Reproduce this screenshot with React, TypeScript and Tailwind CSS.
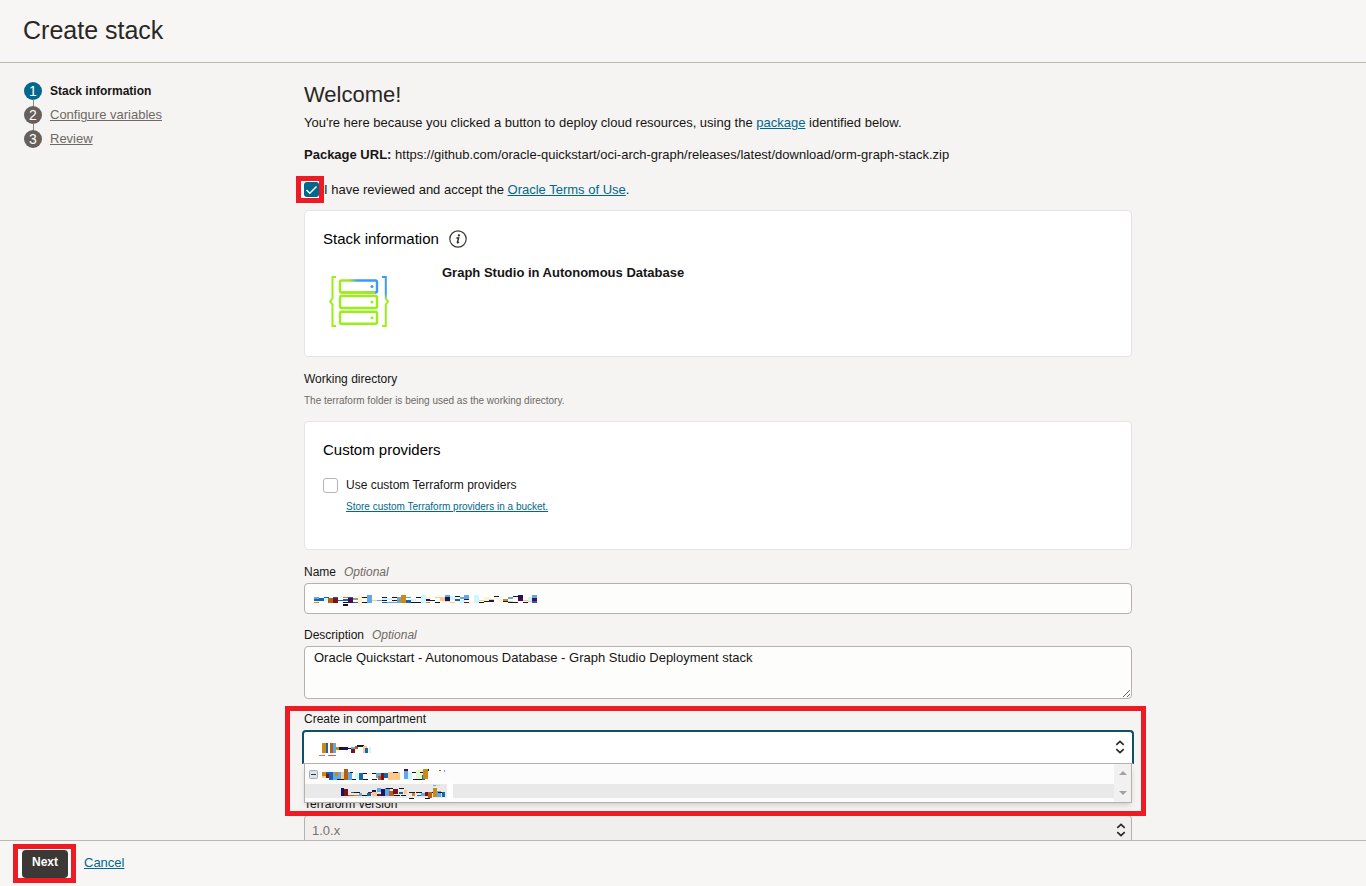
import type { ReactNode } from "react";

type Cell = [x: number, y: number, w: number, h: number, fill: string];

const INK = "#16161d";
const NAVY = "#1b1464";
const BLUE = "#1565b0";
const SKY = "#5ea9e6";
const PALE = "#cdf6ff";
const PEACH = "#fbc98a";
const CREAM = "#fff3cf";
const GOLD = "#cc8a12";
const RUST = "#b0601a";
const WINE = "#7d1018";
const PLUM = "#4f0a52";

const nameCells: Cell[] = [
  [0, 2, 5, 2, SKY], [0, 4, 5, 2, BLUE], [0, 7, 5, 1, GOLD],
  [5, 3, 5, 3, BLUE], [10, 2, 5, 1, BLUE], [10, 3, 4, 3, PALE],
  [14, 3, 5, 5, RUST], [19, 3, 5, 5, WINE], [19, 2, 5, 1, BLUE], [24, 5, 5, 1, BLUE],
  [29, 2, 5, 1, GOLD], [29, 4, 5, 2, BLUE], [29, 7, 5, 1, INK], [29, 9, 5, 2, INK],
  [34, 3, 5, 5, PLUM], [34, 2, 5, 1, BLUE], [39, 3, 5, 1, GOLD], [39, 4, 5, 1, SKY], [39, 7, 5, 1, BLUE],
  [44, 0, 4, 11, CREAM], [48, 2, 5, 1, INK], [48, 7, 5, 1, INK],
  [53, 0, 5, 8, SKY], [58, 5, 5, 1, PEACH], [63, 5, 5, 1, SKY],
  [68, 2, 5, 1, NAVY], [68, 3, 5, 2, PALE], [68, 5, 5, 1, INK], [68, 7, 5, 1, BLUE],
  [73, 3, 5, 2, PALE], [73, 7, 5, 1, SKY], [78, 2, 5, 1, INK], [78, 5, 5, 1, INK], [78, 7, 5, 1, SKY],
  [83, 2, 5, 6, SKY], [83, 5, 5, 1, GOLD], [87, 0, 5, 8, GOLD], [92, 2, 5, 1, SKY], [92, 5, 5, 3, BLUE],
  [97, 4, 5, 2, PALE], [97, 7, 5, 1, INK], [102, 2, 5, 1, INK], [102, 7, 5, 1, INK],
  [107, 0, 5, 8, PALE], [112, 2, 5, 3, CREAM], [112, 4, 4, 2, NAVY], [112, 7, 4, 1, GOLD],
  [116, 5, 5, 1, INK], [121, 2, 5, 1, PEACH], [121, 7, 5, 1, INK],
  [126, 2, 5, 4, PEACH], [131, 0, 5, 2, SKY], [131, 2, 5, 4, NAVY], [131, 6, 5, 1, PEACH],
  [136, 1, 5, 4, PALE], [136, 7, 5, 1, PEACH], [141, 1, 5, 1, INK], [141, 4, 5, 2, BLUE], [141, 6, 5, 1, CREAM],
  [146, 2, 5, 2, SKY], [146, 5, 5, 3, PALE], [150, 0, 5, 4, SKY], [150, 4, 5, 1, NAVY], [150, 7, 5, 1, WINE],
  [160, 0, 5, 8, PALE], [165, 5, 5, 1, PEACH], [165, 7, 5, 1, INK], [170, 2, 5, 4, CREAM], [170, 6, 5, 1, INK],
  [175, 4, 5, 1, PEACH], [175, 5, 5, 2, NAVY], [180, 1, 5, 1, INK], [180, 3, 5, 1, CREAM],
  [185, 4, 5, 3, CREAM], [189, 4, 5, 2, GOLD], [189, 6, 5, 1, NAVY],
  [194, 2, 5, 2, SKY], [194, 6, 5, 1, PEACH], [194, 7, 5, 1, INK], [199, 1, 5, 1, INK], [199, 7, 5, 1, INK],
  [204, 0, 5, 3, NAVY], [204, 3, 5, 3, PLUM], [209, 5, 5, 1, PEACH], [209, 7, 5, 1, INK],
  [214, 2, 5, 4, PALE], [214, 6, 5, 1, PEACH], [218, 0, 5, 3, SKY], [218, 3, 5, 3, PLUM], [218, 6, 5, 2, BLUE],
];

const compartmentCells: Cell[] = [
  [3, 0, 4, 10, GOLD], [7, 0, 2, 10, BLUE], [11, 0, 3, 10, RUST], [14, 0, 3, 10, SKY],
  [0, 12, 6, 1, "#ee6b74"], [9, 12, 8, 1, "#ee4a55"],
  [17, 4, 3, 3, GOLD], [20, 4, 4, 3, INK], [24, 4, 5, 3, NAVY], [29, 5, 5, 1, INK],
  [32, 4, 5, 2, SKY], [32, 6, 4, 4, WINE], [36, 3, 3, 3, RUST], [38, 2, 6, 2, INK],
  [44, 3, 4, 7, PEACH], [42, 2, 3, 1, INK], [46, 5, 3, 5, BLUE], [50, 4, 2, 6, PALE],
];

const parentCells: Cell[] = [
  [0, 3, 4, 4, GOLD], [0, 7, 4, 2, PEACH], [4, 5, 3, 4, WINE], [4, 3, 3, 2, BLUE], [7, 3, 4, 8, BLUE],
  [11, 3, 8, 8, SKY], [13, 3, 3, 4, GOLD], [15, 10, 7, 1, INK], [19, 3, 3, 7, PEACH], [22, 0, 4, 11, RUST],
  [26, 3, 4, 8, SKY], [28, 3, 3, 1, INK], [30, 10, 4, 1, INK], [33, 4, 4, 6, PALE], [37, 4, 4, 7, BLUE], [41, 4, 4, 1, INK],
  [41, 10, 5, 1, INK], [45, 4, 5, 2, CREAM], [50, 4, 5, 1, INK], [50, 10, 5, 1, INK], [54, 4, 5, 5, SKY],
  [56, 7, 3, 4, RUST], [59, 4, 3, 7, WINE], [62, 4, 4, 5, BLUE], [66, 3, 12, 8, PEACH], [71, 3, 5, 1, INK],
  [82, 0, 4, 2, PLUM], [82, 2, 4, 8, SKY], [86, 3, 4, 8, PALE], [90, 3, 4, 1, INK], [94, 1, 7, 9, "#e4f8ce"],
  [91, 10, 9, 1, INK], [98, 3, 4, 1, INK], [100, 6, 3, 5, BLUE], [101, 0, 5, 10, GOLD], [106, 0, 1, 2, INK], [117, 1, 2, 1, RUST], [122, 1, 1, 2, SKY],
];

const childCells: Cell[] = [
  [0, 0, 3, 8, NAVY], [3, 1, 4, 7, WINE], [7, 7, 6, 1, RUST], [10, 4, 4, 1, BLUE], [13, 4, 6, 1, INK], [13, 7, 5, 1, GOLD],
  [18, 5, 3, 3, SKY], [21, 7, 6, 1, INK], [26, 5, 4, 3, BLUE], [27, 4, 4, 1, WINE], [31, 4, 5, 4, PEACH],
  [31, 2, 4, 2, NAVY], [36, 0, 4, 4, SKY], [36, 6, 5, 2, WINE], [40, 1, 4, 7, NAVY], [44, 0, 5, 8, SKY], [45, 0, 7, 1, INK],
  [48, 3, 5, 5, RUST], [52, 1, 5, 5, WINE], [53, 7, 6, 1, INK], [58, 0, 5, 1, INK], [58, 4, 4, 2, BLUE],
  [60, 7, 5, 1, INK], [63, 2, 3, 4, PEACH], [68, 4, 6, 1, NAVY], [68, 10, 5, 1, INK], [71, 5, 3, 3, GOLD], [75, 4, 6, 1, INK],
  [76, 7, 6, 1, BLUE], [80, 5, 4, 3, SKY], [84, 4, 5, 4, WINE], [87, 4, 4, 6, RUST], [84, 10, 5, 1, INK], [91, 4, 4, 1, INK],
  [92, 0, 4, 9, GOLD], [96, 3, 4, 6, SKY], [97, 4, 5, 1, INK], [101, 4, 3, 5, BLUE], [92, -3, 3, 1, SKY], [96, -3, 3, 1, PEACH],
];

function Mosaic({ cells, width, height }: { cells: Cell[]; width: number; height: number }) {
  return (
    <svg className="shrink-0" width={width} height={height} viewBox={`0 0 ${width} ${height}`} shapeRendering="crispEdges" overflow="visible" aria-hidden="true">
      {cells.map(([x, y, w, h, fill], i) => (
        <rect key={i} x={x} y={y} width={w} height={h} fill={fill} />
      ))}
    </svg>
  );
}

function UpDown() {
  return (
    <svg width="10" height="14" viewBox="0 0 10 14" fill="none" stroke="#2b2825" strokeWidth="1.7" aria-hidden="true">
      <path d="M1.3 4.800 5 1.300l3.700 3.500M1.300 9.200 5 12.700l3.700-3.500" />
    </svg>
  );
}

function StackLogo() {
  return (
    <svg width="60" height="52" viewBox="0 0 60 52" fill="none" strokeWidth="2.400" aria-hidden="true">
      <defs>
        <linearGradient id="rack" gradientUnits="userSpaceOnUse" x1="20" y1="14" x2="32" y2="3">
          <stop offset="0.35" stopColor="#9bee17" />
          <stop offset="0.75" stopColor="#3b9bf5" />
        </linearGradient>
        <linearGradient id="brace" gradientUnits="userSpaceOnUse" x1="0" y1="19" x2="0" y2="24">
          <stop offset="0" stopColor="#3b9bf5" />
          <stop offset="1" stopColor="#9bee17" />
        </linearGradient>
      </defs>
      <path stroke="#9bee17" strokeWidth="2" d="M7 2H3.500V23.500L1 26.500l2.500 3V51H7" />
      <path stroke="url(#brace)" strokeWidth="2" d="M53 2h3.800V23.500L59 26.500l-2.200 3V51H53" />
      <rect x="11" y="5.500" width="37" height="12" rx="1.500" stroke="url(#rack)" />
      <path stroke="#9bee17" d="M12 17.500h34" />
      <rect x="11" y="21" width="37" height="12" rx="1.500" stroke="#9bee17" />
      <rect x="11" y="36.800" width="37" height="12" rx="1.500" stroke="#9bee17" />
      <circle cx="43" cy="11.500" r="1.500" fill="#3b9bf5" />
      <circle cx="43" cy="27" r="1.500" fill="#9bee17" />
      <circle cx="43" cy="42.800" r="1.500" fill="#9bee17" />
    </svg>
  );
}

function InfoIcon() {
  return (
    <svg width="18" height="18" viewBox="0 0 18 18" fill="none" aria-hidden="true">
      <circle cx="9" cy="9" r="8.200" stroke="#3a3632" strokeWidth="1.200" />
      <circle cx="9.900" cy="5.400" r="1.100" fill="#2a2724" />
      <path d="M7.400 8h2.200l-1.200 4.400c-.1.500.6.500 1.500-.3" stroke="#2a2724" strokeWidth="1.400" />
    </svg>
  );
}

function TextLink({ children }: { children: ReactNode }) {
  return <a href="#" className="text-[#00688c] underline">{children}</a>;
}

function Step({ n, label, active, last }: { n: number; label: string; active?: boolean; last?: boolean }) {
  return (
    <li className="relative flex h-6 items-center gap-2">
      {!last && <span className="absolute top-5 left-[9px] h-2 w-px bg-[#8b8580]" />}
      <span className={`flex size-[18px] shrink-0 items-center justify-center rounded-full text-sm text-white ${active ? "bg-[#00688c]" : "bg-[#665f5b]"}`}>{n}</span>
      {active ? (
        <span className="font-bold text-[#161513]">{label}</span>
      ) : (
        <a href="#" className="text-[13px] text-[#6f6964] underline">{label}</a>
      )}
    </li>
  );
}

function FieldLabel({ id, text, optional }: { id: string; text: string; optional?: boolean }) {
  return (
    <label htmlFor={id} className="flex h-[23px] items-center gap-2">
      {text}
      {optional && <em className="text-[#6f6964]">Optional</em>}
    </label>
  );
}

export default function App() {
  return (
    <div className="flex h-screen flex-col bg-[#f5f4f2] font-['Liberation_Sans',Arial,sans-serif] text-xs text-[#161513]">
      <header className="flex h-[63px] shrink-0 items-center border-b border-[#bcb6ab] bg-[#f7f6f5] px-[23px]">
        <h1 className="text-[25px] text-[#2a2724]">Create stack</h1>
      </header>

      <div className="flex min-h-0 flex-1 overflow-hidden">
        <nav className="w-[304px] shrink-0 px-6 pt-4" aria-label="Steps">
          <ol>
            <Step n={1} label="Stack information" active />
            <Step n={2} label="Configure variables" />
            <Step n={3} label="Review" last />
          </ol>
        </nav>

        <main className="max-w-[828px] flex-1 pt-4">
          <h2 className="text-[22px] leading-8 text-[#2a2724]">Welcome!</h2>
          <p className="text-[13px] leading-6">
            You're here because you clicked a button to deploy cloud resources, using the <TextLink>package</TextLink> identified below.
          </p>
          <p className="mt-2 text-[13px] leading-6">
            <strong>Package URL:</strong> https://github.com/oracle-quickstart/oci-arch-graph/releases/latest/download/orm-graph-stack.zip
          </p>
          <div className="relative mt-2 flex h-[29px] items-center gap-[5px]">
            <span className="absolute top-[1px] -left-2 h-[27px] w-7 border-[5px] border-[#ed1c24] bg-white" />
            <span className="relative flex size-[15px]">
              <input id="terms" type="checkbox" defaultChecked className="size-[15px] appearance-none rounded-[3px] bg-[#00688c]" />
              <svg className="pointer-events-none absolute inset-0" width="15" height="15" viewBox="0 0 15 15" fill="none" stroke="#fff" strokeWidth="1.500" aria-hidden="true">
                <path d="m2.500 8 3.300 3.200L12.500 4.500" />
              </svg>
            </span>
            <label htmlFor="terms" className="relative text-[13px]">
              I have reviewed and accept the <TextLink>Oracle Terms of Use</TextLink>.
            </label>
          </div>

          <section className="mt-1.5 h-[147px] rounded-sm border border-[#e4e3e6] bg-white px-[18px] pt-4">
            <div className="flex h-6 items-center gap-2.5">
              <h3 className="text-[15px] text-black">Stack information</h3>
              <InfoIcon />
            </div>
            <div className="flex items-start gap-[53px] pt-3 pl-1.5">
              <div className="pt-3"><StackLogo /></div>
              <p className="text-[13px] leading-5 font-bold">Graph Studio in Autonomous Database</p>
            </div>
          </section>

          <p className="mt-[10px] leading-6">Working directory</p>
          <p className="text-[10px] leading-5 text-[#6f6964]">The terraform folder is being used as the working directory.</p>

          <section className="mt-[10px] h-[129px] rounded-sm border border-[#e4e3e6] bg-white px-[18px] pt-4">
            <h3 className="text-[15px] leading-6 text-black">Custom providers</h3>
            <div className="mt-[11px] flex h-6 items-center gap-2">
              <input id="custom" type="checkbox" className="size-[15px] appearance-none rounded-[3px] border border-[#b4b4bc] bg-white" />
              <label htmlFor="custom">Use custom Terraform providers</label>
            </div>
            <p className="pl-[23px] text-[10px] leading-5">
              <TextLink>Store custom Terraform providers in a bucket.</TextLink>
            </p>
          </section>

          <div className="mt-[10px]">
            <FieldLabel id="name" text="Name" optional />
            <div className="relative">
              <input id="name" className="block h-[31px] w-full rounded-sm border border-[#b5b1ac] bg-[#fdfdfc] px-2.5" />
              <div className="pointer-events-none absolute top-3 left-2.5"><Mosaic cells={nameCells} width={224} height={11} /></div>
            </div>
          </div>

          <div className="mt-[9px]">
            <FieldLabel id="description" text="Description" optional />
            <textarea
              id="description"
              className="block h-[53px] w-full resize-y rounded-sm border border-[#b5b1ac] bg-[#fdfdfc] px-[9px] py-[3px] text-[13px] leading-4"
              defaultValue="Oracle Quickstart - Autonomous Database - Graph Studio Deployment stack"
            />
          </div>

          <div className="relative mt-2">
            <span className="pointer-events-none absolute -top-px -right-[14px] -left-[19px] z-20 h-[110px] border-[5px] border-[#ed1c24]" />
            <FieldLabel id="compartment" text="Create in compartment" />
            <div className="relative -mx-0.5">
              <input
                id="compartment"
                role="combobox"
                aria-expanded="true"
                aria-controls="compartment-list"
                className="block h-[34px] w-full rounded-t border-2 border-b border-[#0f4f68] border-b-[#b5b1ac] bg-white px-4 outline-none"
              />
              <div className="pointer-events-none absolute top-[13px] left-[17px]"><Mosaic cells={compartmentCells} width={52} height={13} /></div>
              <div className="pointer-events-none absolute top-2.5 right-[9px]"><UpDown /></div>
              <div className="absolute inset-x-0.5 top-full z-10 flex h-[39px] border border-t-0 border-[#b5b1ac] bg-[#fcfcfc] shadow-md">
                <ul id="compartment-list" role="tree" className="flex-1">
                  <li role="treeitem" aria-label="Parent compartment" className="flex h-5 items-center gap-1 pl-1">
                    <svg width="9" height="9" viewBox="0 0 9 9" fill="#dde3ea" stroke="#a3adb8" aria-hidden="true">
                      <rect x="0.500" y="0.500" width="8" height="8" rx="1" />
                      <path d="M2 4.500h5" stroke="#333a44" />
                    </svg>
                    <Mosaic cells={parentCells} width={123} height={10} />
                  </li>
                  <li role="treeitem" aria-label="Child compartment" className="flex h-[14px] items-center bg-[#e9e9e9]">
                    <span className="ml-[33px] flex h-[22px] w-[115px] shrink-0 items-center border-y-4 border-r-[6px] border-[#fdfdfd] bg-[#e9e9e9] pt-1 pl-[3px]">
                      <Mosaic cells={childCells} width={105} height={10} />
                    </span>
                  </li>
                </ul>
                <div className="flex w-[17px] flex-col items-center justify-between bg-[#f1f1f1] py-[7px]">
                  <svg width="8" height="4" viewBox="0 0 8 4" fill="#a3a3a3" aria-hidden="true"><path d="M0 4 4 0l4 4z" /></svg>
                  <svg width="8" height="4" viewBox="0 0 8 4" fill="#a3a3a3" aria-hidden="true"><path d="m0 0 4 4 4-4z" /></svg>
                </div>
              </div>
            </div>
          </div>

          <div className="mt-7">
            <FieldLabel id="version" text="Terraform version" />
            <div className="relative">
              <select id="version" disabled className="block h-[31px] w-full appearance-none rounded-sm border border-[#b5b1ac] bg-[#f0efed] px-[7px] text-[13px] text-[#77716c] opacity-100">
                <option>1.0.x</option>
              </select>
              <div className="pointer-events-none absolute top-2 right-1.5"><UpDown /></div>
            </div>
          </div>
        </main>
      </div>

      <footer className="flex h-[46px] shrink-0 items-start gap-4 border-t border-[#bbb7b2] bg-[#f7f6f5] px-[22px] pt-[9px]">
        <span className="relative">
          <span className="pointer-events-none absolute -top-[6px] -left-[9px] h-[39px] w-[63px] border-[5px] border-[#ed1c24] bg-white" />
          <button type="button" className="relative h-7 w-[46px] rounded-sm bg-[#3c3835] pb-1 text-xs font-bold text-white">Next</button>
        </span>
        <a href="#" className="text-[13px] leading-[26px] text-[#00688c] underline">Cancel</a>
      </footer>
    </div>
  );
}
